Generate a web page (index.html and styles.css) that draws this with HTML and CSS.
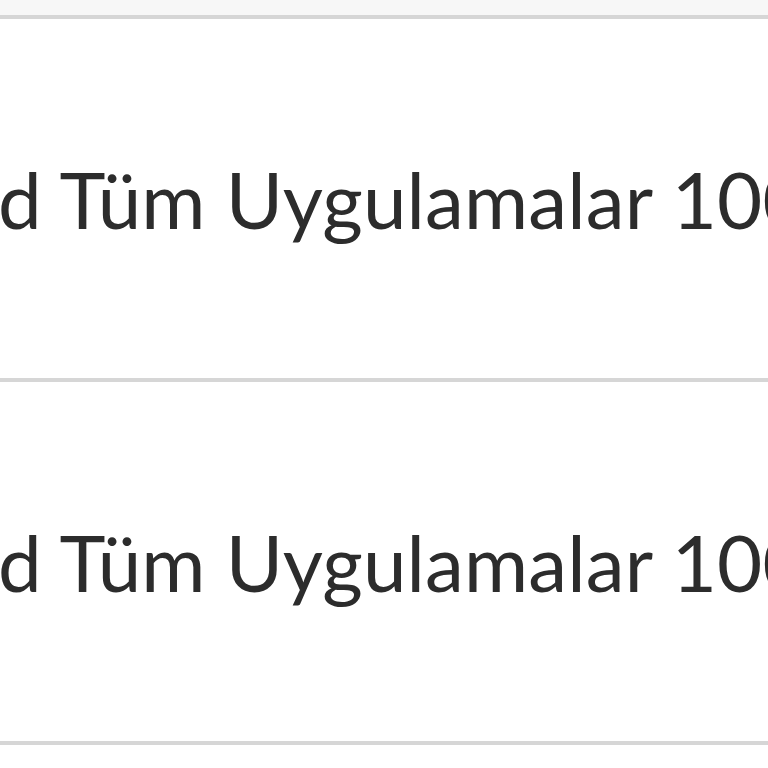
FILE: index.html
```html
<!DOCTYPE html>
<html lang="tr">
<head>
<meta charset="utf-8">
<link rel="stylesheet" href="styles.css">
</head>
<body>
<div class="table">
  <div class="head"></div>
  <div class="row"><span class="cell">d Tüm Uygulamalar 100GB</span></div>
  <div class="row"><span class="cell">d Tüm Uygulamalar 100GB</span></div>
</div>
</body>
</html>
```
FILE: styles.css
```css
html, body {
  margin: 0;
  padding: 0;
  background: #ffffff;
  overflow: hidden;
  width: 768px;
  height: 768px;
}
.table {
  display: flex;
  flex-direction: column;
}
.head {
  height: 15px;
  background: #f7f7f7;
  border-bottom: 4px solid #d6d6d6;
}
.row {
  height: 359px;
  border-bottom: 4px solid #d6d6d6;
  display: flex;
  align-items: center;
  overflow: hidden;
}
.cell {
  font-family: "Lato", sans-serif;
  font-size: 78px;
  letter-spacing: 0.15px;
  color: #2c2c2c;
  white-space: nowrap;
  margin-left: -2px;
}
```
